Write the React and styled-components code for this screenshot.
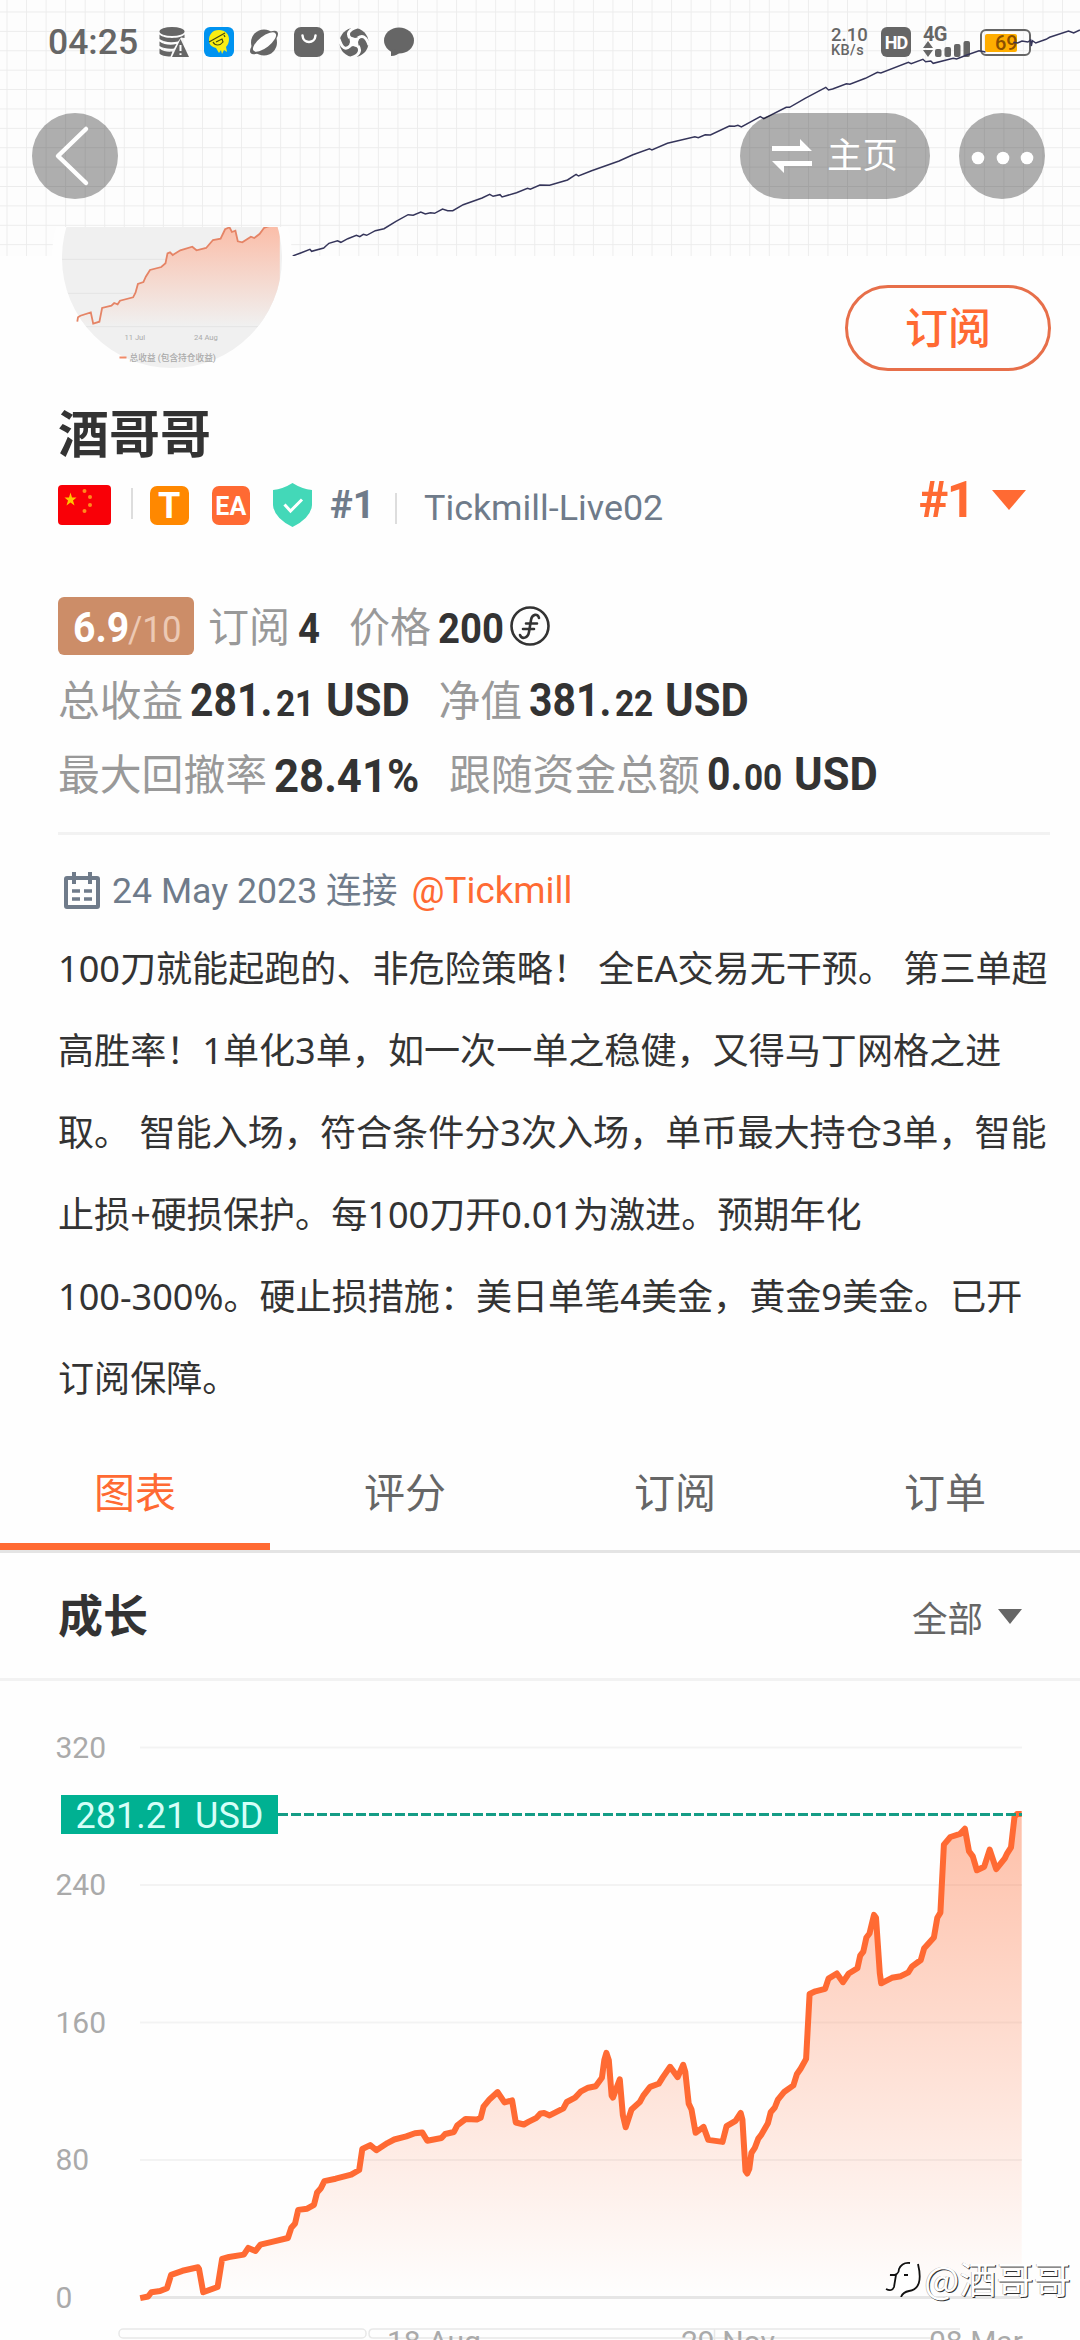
import React from 'react';
import styled, { createGlobalStyle } from 'styled-components'


const colors = {
    orange: '#ff6a33',
    dark: '#333333',
    grey: '#666666',
    lightGrey: '#999999',
    slate: '#6f7b8a',
    teal: '#00b192',
    line: '#f2f2f2',
}

const fonts = {
    main: `Roboto, "Noto Sans CJK SC", sans-serif`,
    text: `"Noto Sans", "Noto Sans CJK SC", sans-serif`,
}

const GlobalStyle = createGlobalStyle`
    * {
        box-sizing: border-box;
    }
    body {
        margin: 0;
        background: #fefefe;
        font-family: ${fonts.main};
        color: ${colors.dark};
    }
    svg {
        display: block;
        flex-shrink: 0;
    }
`

const Screen = styled.div`
    position: relative;
    width: 1080px;
    height: 2340px;
    overflow: hidden;
    background: #fefefe;
`

/* cover */
const Cover = styled.header`
    position: relative;
    height: 256px;
    background-color: #fdfdfd;
    background-image:
        linear-gradient(#ececec 1px, transparent 1px),
        linear-gradient(90deg, #ededed 1px, transparent 1px);
    background-size: 19.56px 19.4px;
    background-position: 6.5px 11.5px;
`
const CoverLine = styled.svg`
    position: absolute;
    left: 0;
    top: 0;
`
const StatusBar = styled.div`
    display: flex;
    align-items: center;
    height: 84px;
    padding: 0 44px 0 48px;
    color: ${colors.grey};
`
const Clock = styled.div`
    width: 111px;
    font-size: 35.5px;
    font-weight: 500;
    line-height: 84px;
`
const StatusIcons = styled.div`
    display: flex;
    gap: 15px;
    flex: 1;
`
const Speed = styled.div`
    width: 50px;
    font-weight: 500;
    font-size: 18.5px;
    line-height: 17px;
    small {
        display: block;
        font-size: 14.5px;
        line-height: 14px;
        letter-spacing: .4px;
    }
`
const HdBadge = styled.div`
    width: 30px;
    height: 30px;
    margin-right: 12px;
    border-radius: 6px;
    background: ${colors.grey};
    color: #ffffff;
    font-size: 18px;
    font-weight: 700;
    line-height: 31px;
    text-align: center;
    letter-spacing: -1px;
`
const Signal = styled.div`
    width: 57px;
    height: 30px;
    font-size: 20px;
    font-weight: 700;
    line-height: 14px;
    letter-spacing: -.6px;
`
const Battery = styled.div`
    width: 51px;
    height: 27px;
    padding: 3px;
    margin-right: 5px;
    border: 2px solid ${colors.grey};
    border-radius: 6px;
`
const BatteryLevel = styled.div`
    width: 32px;
    height: 18px;
    padding-left: 10px;
    border-radius: 2px;
    background: #ffad00;
    color: #8a4f00;
    font-size: 20px;
    font-weight: 500;
    line-height: 18px;
`
const NavBar = styled.nav`
    position: relative;
    display: flex;
    align-items: center;
    padding: 29px 35px 0 32px;
`
const RoundButton = styled.div`
    width: 86px;
    height: 86px;
    border-radius: 43px;
    background: rgba(0, 0, 0, .31);
`
const HomeButton = styled.div`
    display: flex;
    align-items: center;
    width: 190px;
    height: 86px;
    margin: 0 29px 0 auto;
    padding-left: 32px;
    gap: 15px;
    border-radius: 43px;
    background: rgba(0, 0, 0, .31);
    color: #ffffff;
    font-size: 35.5px;
    line-height: 86px;
`

/* profile */
const ProfileTop = styled.div`
    position: relative;
    display: flex;
    justify-content: space-between;
    height: 151px;
    margin-top: -29px;
    padding: 0 29px 0 52px;
`
const AvatarCrop = styled.div`
    width: 240px;
    height: 151px;
    overflow: hidden;
`
const Avatar = styled.div`
    width: 240px;
    height: 240px;
    margin-top: -89px;
    border: 10px solid #fefefe;
    border-radius: 50%;
    background: #fefefe;
    svg {
        overflow: visible;
    }
`
const SubscribeButton = styled.div`
    width: 206px;
    height: 86px;
    margin-top: 58px;
    border: 3px solid #e76f4a;
    border-radius: 43px;
    color: ${colors.orange};
    font-size: 43px;
    font-weight: 500;
    line-height: 82px;
    text-align: center;
`
const Name = styled.h1`
    height: 74px;
    margin: 22px 0 0 58px;
    font-size: 51px;
    font-weight: 700;
    line-height: 72px;
`
const BadgeRow = styled.div`
    display: flex;
    align-items: center;
    height: 50px;
    margin-top: 6px;
    padding: 0 54px 0 58px;
`
const Separator = styled.span`
    width: 2px;
    height: 31px;
    margin: ${props => props.$margin};
    background: #dddddd;
`
const Badge = styled.span`
    width: 38.5px;
    height: 39px;
    margin-right: 23px;
    border-radius: 7px;
    background: ${props => props.$color};
    color: #ffffff;
    font-size: ${props => props.$size}px;
    font-weight: 700;
    line-height: 41px;
    text-align: center;
`
const Rank = styled.span`
    width: 65px;
    margin-left: 18px;
    color: ${colors.slate};
    font-size: 38.5px;
    font-weight: 700;
    line-height: 52px;
`
const Server = styled.span`
    color: ${colors.slate};
    font-size: 35.9px;
    line-height: 52px;
    padding-top: 5px;
`
const TopRank = styled.span`
    display: flex;
    align-items: center;
    gap: 18px;
    margin: -11px 0 0 auto;
    color: ${colors.orange};
    font-size: 50px;
    font-weight: 700;
    letter-spacing: -1.5px;
`

/* account stats */
const Stats = styled.section`
    margin: 59px 30px 0 58px;
    padding-bottom: 21px;
    border-bottom: 3px solid ${colors.line};
`
const StatRow = styled.div`
    display: flex;
    align-items: center;
    height: 74px;
`
const Score = styled.div`
    display: flex;
    align-items: baseline;
    width: 136px;
    height: 58px;
    margin-right: 14px;
    padding-left: 15px;
    border-radius: 6px;
    background: #cc8d68;
    color: #ffffff;
    line-height: 61px;
`
const Label = styled.span`
    margin-left: ${props => props.$left || 0}px;
    margin-right: ${props => props.$right || 7}px;
    padding-top: 3px;
    color: ${colors.lightGrey};
    font-size: ${props => props.$size || 41.8}px;
    line-height: 60px;
    white-space: nowrap;
`
const Figure = styled.span`
    display: flex;
    align-items: baseline;
    padding-top: 3px;
    line-height: 60px;
`
/* narrow figures: the box keeps the squeezed width */
const Digits = styled.span`
    display: inline-block;
    width: ${props => props.$width}px;
    font-size: ${props => props.$size || 46}px;
    font-weight: ${props => props.$weight || 700};
    color: ${props => props.$color || 'inherit'};
    white-space: pre;
    transform: scaleX(${props => props.$squeeze || .89});
    transform-origin: 0 50%;
`

/* description */
const Connected = styled.div`
    display: flex;
    align-items: center;
    margin: 29px 0 0 64px;
    height: 54px;
    color: ${colors.slate};
    font-size: 35.7px;
    line-height: 54px;
    svg {
        margin-right: 12px;
    }
    a {
        margin-left: 14px;
        color: ${colors.orange};
        font-size: 36.8px;
    }
`
const Description = styled.p`
    height: 492px;
    margin: 9px 0 0 58px;
    font-family: ${fonts.text};
    font-size: 36.1px;
    line-height: 82px;
    white-space: nowrap;
`

/* tabs */
const Tabs = styled.div`
    display: grid;
    grid-template-columns: repeat(4, 1fr);
    height: 125px;
    border-bottom: 3px solid #e4e4e4;
    margin-top: 9px;
`
const Tab = styled.div`
    height: 122px;
    border-bottom: 7px solid ${props => props.$active ? colors.orange : 'transparent'};
    color: ${props => props.$active ? colors.orange : colors.grey};
    font-size: 41px;
    line-height: 133px;
    text-align: center;
`
const SectionHead = styled.div`
    display: flex;
    align-items: center;
    justify-content: space-between;
    height: 128px;
    padding: 0 58px;
    border-bottom: 3px solid ${colors.line};
`
const SectionTitle = styled.h2`
    margin: 0;
    padding-top: 4px;
    font-size: 45px;
    font-weight: 700;
    line-height: 120px;
`
const Period = styled.div`
    display: flex;
    align-items: center;
    gap: 15px;
    padding-top: 2px;
    color: ${colors.grey};
    font-size: 35.5px;
`
const Watermark = styled.div`
    position: absolute;
    right: 9px;
    top: 2252px;
    display: flex;
    align-items: center;
    gap: 3px;
    color: #ffffff;
    font-family: "Noto Sans CJK SC", sans-serif;
    font-size: 37.2px;
    line-height: 52px;
    text-shadow: 1px 1px 0 #333333, -.5px -.5px 0 #aaaaaa;
`

/* points are kept in source units and scaled down to pixels */
const scale = (points, kx, ky) =>
    points.trim().split(/\s+/).map(p => {
        const [x, y] = p.split(',').map(Number)
        return `${(x / kx).toFixed(1)},${(y / ky).toFixed(1)}`
    }).join(' ')

const coverPoints = scale(`850,768 875,758 900,748 905,754 940,744 955,730 980,722 990,727 1010,716 1035,706 1045,710
    1055,703 1065,706 1090,692 1115,686 1150,664 1185,644 1200,646 1222,636 1235,642 1250,638 1262,640 1285,627
    1300,632 1315,632 1345,614 1400,594 1422,583 1432,589 1452,584 1458,591 1500,578 1532,565 1540,568 1568,555
    1596,556 1648,540 1673,523 1680,528 1718,512 1798,483 1838,464 1886,446 1893,450 1938,430 2018,410 2028,413
    2048,404 2063,405 2118,378 2133,379 2143,376 2153,381 2208,350 2218,356 2283,322 2293,322 2338,295 2398,262
    2406,270 2418,267 2458,251 2468,253 2513,235 2548,217 2558,219 2638,187 2646,191 2680,178 2688,185 2703,183
    2710,190 2768,175 2778,177 2808,165 2843,152 2862,156`, 2.904, 3)
const coverTail = scale(`2943,127 2955,129 2968,123 2985,126 2993,120 2995,138 2998,122 3008,129 3038,118 3048,112
    3103,93 3118,99 3136,90`, 2.904, 3)

const avatarPoints = scale(`226,335 228,322 235,317 265,307 272,341 290,335 298,294 325,287 333,279 343,283 350,272
    388,262 395,248 402,222 418,216 425,200 437,180 470,171 482,160 488,130 495,127 503,135 525,121 560,110 572,121
    600,114 620,90 642,86 655,58 668,52 675,66 685,62 692,94 705,97 730,80 740,84 755,72 768,54 778,50 814,40`, 2.904, 3)

const growthPoints = scale(`407,1462 430,1458 440,1447 465,1444 485,1437 497,1403 530,1393 575,1384 578,1388 590,1447
    632,1434 645,1363 665,1358 708,1352 721,1335 742,1343 756,1327 790,1320 836,1310 846,1284 857,1273 866,1239
    892,1236 912,1226 921,1195 932,1184 942,1166 975,1160 1020,1150 1043,1138 1052,1085 1075,1075 1093,1088
    1125,1070 1145,1061 1180,1053 1205,1045 1226,1043 1241,1064 1282,1057 1293,1047 1318,1042 1328,1025 1352,1009
    1385,1010 1396,1006 1404,978 1422,959 1445,941 1465,967 1487,962 1498,1018 1521,1023 1536,1016 1558,1006
    1570,995 1580,994 1596,1000 1636,982 1646,966 1670,955 1686,940 1708,930 1730,926 1748,905 1755,860 1761,842
    1768,860 1776,950 1780,955 1800,909 1809,1000 1817,1030 1834,985 1858,966 1868,950 1888,928 1913,920 1925,903
    1946,877 1968,903 1984,872 1990,890 2000,970 2008,985 2020,1044 2043,1029 2057,1062 2098,1067 2110,1027
    2136,1014 2151,994 2156,1010 2165,1140 2170,1147 2176,1135 2182,1095 2192,1082 2202,1059 2210,1050 2230,1020
    2238,992 2250,980 2259,960 2278,940 2304,924 2314,896 2325,882 2341,857 2351,693 2368,686 2396,680 2406,654
    2430,641 2448,663 2465,641 2490,628 2498,596 2507,586 2516,550 2525,540 2538,493 2544,500 2555,640 2559,666
    2590,652 2616,648 2638,638 2648,624 2674,607 2684,577 2712,550 2722,500 2731,487 2741,315 2760,296 2788,288
    2802,275 2814,332 2825,345 2837,380 2858,371 2874,328 2893,377 2918,350 2925,337 2936,322 2946,245 2953,238
    2967,238`, 2.904, 2.529)

const axis = [
    { value: 320, y: 27.5 },
    { value: 240, y: 165 },
    { value: 160, y: 302.5 },
    { value: 80, y: 440 },
    { value: 0, y: 577.5 },
]

const tabs = ['图表', '评分', '订阅', '订单']

const Money = ({ whole, cents, widths }) => (
    <Figure>
        <Digits $width={widths[0]}>{whole}.</Digits>
        <Digits $width={widths[1]} $size={37} $squeeze={.9}>{cents}</Digits>
        <Digits $width={85} $squeeze={.945}>USD</Digits>
    </Figure>
)

const StatusBarContent = () => (
    <StatusBar>
        <Clock>04:25</Clock>
        <StatusIcons>
            <svg width="30" height="30" viewBox="0 0 30 30" fill={colors.grey}>
                <ellipse cx="13" cy="4.5" rx="12.5" ry="4.5" />
                <path d="M.5 7.5C4 12 22 12 25.500 7.500V11L22 10.500 19 14.500C12 16 4 15 .5 12Z" />
                <path d="M.5 14.500C5 18 12 18.500 17.500 17L15 21.500C10 22 4 21.500 .5 19Z" />
                <path d="M.5 21.500C4 24.500 9 25 13.500 24.500L11.500 29.500C6 29.500 2 28.500 .5 26.500Z" />
                <path d="M21.500 12 30 30H13Z" />
                <path d="M21.500 18V24M21.500 26.200V28" stroke="#fff" strokeWidth="2" />
            </svg>
            <svg width="30" height="30" viewBox="0 0 30 30">
                <rect width="30" height="30" rx="6" fill="#0093f0" />
                <path d="M15 3C8 3 5 8 5 13c0 5 3 7 7 8l3 5 2-3 1 4 2-4 3 2-1-5c2-2 3-5 3-8 0-5-4-9-10-9Z" fill="#f9ee13" />
                <path d="M5 15 21 6M9 15c2 4 7 4 10 0l-1-3-6 3M20 8l1 2" fill="none" stroke="#454a10" strokeWidth="1.2" />
            </svg>
            <svg width="30" height="30" viewBox="0 0 30 30">
                <circle cx="15" cy="15.500" r="13" fill={colors.grey} />
                <ellipse cx="15" cy="15.500" rx="17" ry="6.500" transform="rotate(-38 15 15.500)" fill={colors.grey} />
                <ellipse cx="15.500" cy="15" rx="14" ry="5.700" transform="rotate(-38 15.500 15)" fill="#fdfdfd" />
            </svg>
            <svg width="30" height="30" viewBox="0 0 30 30">
                <rect width="30" height="30" rx="7" fill={colors.grey} />
                <path d="M8.500 8.500C9 17 21 17 21.500 8.500" fill="none" stroke="#fff" strokeWidth="2.500" strokeLinecap="round" />
            </svg>
            <svg width="30" height="30" viewBox="0 0 30 30">
                <circle cx="15" cy="15.500" r="14.500" fill={colors.grey} />
                <g fill="none" stroke="#fdfdfd" strokeWidth="3">
                    <path d="M18 0C9 3 8 7 11 11M30 18C27 9 23 8 19 11M12 31C21 28 22 23 19 19M0 12C3 22 7 23 11 19" />
                </g>
                <path d="M10 9 16 11 21 10 19 15 20 21 14 19 9 21 11 15Z" fill="#fdfdfd" />
            </svg>
            <svg width="30" height="30" viewBox="0 0 30 30" fill={colors.grey}>
                <ellipse cx="15" cy="13.500" rx="15" ry="13" />
                <path d="M7 22V29C11 29 15 27 17 24Z" />
            </svg>
        </StatusIcons>
        <Speed>2.10<small>KB/s</small></Speed>
        <HdBadge>HD</HdBadge>
        <Signal>
            4G
            <svg width="48" height="16" viewBox="0 0 48 16" fill={colors.grey}>
                <path d="M0 7 5 0 10 7ZM0 9H10L5 16Z" />
                <rect x="12" y="8" width="6.500" height="8" rx="2" />
                <rect x="21.500" y="6" width="6.500" height="10" rx="2" />
                <rect x="31" y="3" width="6.500" height="13" rx="2" />
                <rect x="40.500" y="0" width="6.500" height="16" rx="2" />
            </svg>
        </Signal>
        <Battery>
            <BatteryLevel>69</BatteryLevel>
        </Battery>
    </StatusBar>
)

const AvatarPicture = () => (
    <svg width="220" height="220" viewBox="62.500 -62 220 220">
        <defs>
            <linearGradient id="avatarFill" x1="0" y1="0" x2="0" y2="1">
                <stop offset="0" stopColor="#fbbca6" />
                <stop offset="1" stopColor="#f0f0f0" />
            </linearGradient>
            <clipPath id="avatarClip">
                <circle cx="172.500" cy="48" r="110" />
            </clipPath>
        </defs>
        <g clipPath="url(#avatarClip)">
            <rect x="60" y="-64" width="230" height="230" fill="#f0f0f0" />
            <path d="M60 49.300H280M60 83.300H280M60 116.700H280" stroke="#e4e4e4" />
            <polygon points={`${avatarPoints} 280.300,116 78,116`} fill="url(#avatarFill)" />
        </g>
        <polyline points={avatarPoints} fill="none" stroke="#e58466" strokeWidth="1.800" />
        <g fill="#aaaaaa" fontFamily={fonts.main} fontSize="7.600">
            <text x="125" y="130">11 Jul</text>
            <text x="194.500" y="130">24 Aug</text>
            <text x="130" y="151" fontSize="8.700" fontWeight="500">总收益 (包含持仓收益)</text>
        </g>
        <path d="M120 147.500H127" stroke="#f08a68" strokeWidth="2" />
    </svg>
)

const GrowthChart = () => (
    <svg width="1080" height="659" viewBox="0 -39 1080 659">
        <defs>
            <linearGradient id="growthFill" gradientUnits="userSpaceOnUse" x1="0" y1="94" x2="0" y2="577">
                <stop offset="0" stopColor={colors.orange} stopOpacity=".42" />
                <stop offset="1" stopColor={colors.orange} stopOpacity="0" />
            </linearGradient>
        </defs>
        {axis.map(({ value, y }) => (
            <g key={value}>
                <path d={`M140 ${y}H1022`} stroke={value ? '#f3f3f3' : '#e6e6e6'} strokeWidth={value ? 2 : 3} />
                <text x="55.500" y={y + 10} fontFamily={fonts.main} fontSize="30" fill="#aaaaaa">{value}</text>
            </g>
        ))}
        <polygon points={`${growthPoints} 1021.700,577 140,577`} fill="url(#growthFill)" />
        <polyline points={growthPoints} fill="none" stroke={colors.orange} strokeWidth="6" strokeLinejoin="round" />
        <path d="M278 94.500H1022" stroke="#149c85" strokeWidth="3" strokeDasharray="10 3" />
        <rect x="61" y="75" width="217" height="39" fill={colors.teal} />
        <text x="75.500" y="108" fontFamily={fonts.main} fontSize="36" fill="#d5fff8">281.21 USD</text>
        <g fill="none" stroke="#e8e8e8" strokeWidth="1.500">
            <rect x="119" y="609" width="247" height="9" rx="4" />
            <path d="M960 609H373Q369 609 369 613.500T373 618H930M714.500 609V620" />
        </g>
        <g fill="#aaaaaa" fontFamily={fonts.main} fontSize="30">
            <text x="387" y="631.500">18 Aug</text>
            <text x="681" y="631.500">29 Nov</text>
            <text x="929" y="631.500">08 Mar</text>
        </g>
    </svg>
)

const App = () => {
    return (
        <Screen>
            <GlobalStyle />
            <Cover>
                <StatusBarContent />
                <CoverLine width="1080" height="256" fill="none" stroke="#35355a" strokeWidth="1.500">
                    <polyline points={coverPoints} />
                    <polyline points={coverTail} />
                </CoverLine>
                <NavBar>
                    <RoundButton>
                        <svg width="86" height="86" fill="none" stroke="#fff" strokeWidth="4.500" strokeLinecap="round" strokeLinejoin="round">
                            <path d="M54 16 26 43 54 70" />
                        </svg>
                    </RoundButton>
                    <HomeButton>
                        <svg width="40" height="34" viewBox="0 0 40 34" fill="#fff">
                            <path d="M0 7H28V0L40 12H0ZM40 27H12V34L0 22H40Z" />
                        </svg>
                        主页
                    </HomeButton>
                    <RoundButton>
                        <svg width="86" height="86" fill="#fff">
                            <circle cx="19" cy="45" r="6.300" />
                            <circle cx="44" cy="45" r="6.300" />
                            <circle cx="68" cy="45" r="6.300" />
                        </svg>
                    </RoundButton>
                </NavBar>
            </Cover>

            <ProfileTop>
                <AvatarCrop>
                    <Avatar><AvatarPicture /></Avatar>
                </AvatarCrop>
                <SubscribeButton>订阅</SubscribeButton>
            </ProfileTop>
            <Name>酒哥哥</Name>
            <BadgeRow>
                <svg width="53" height="40" viewBox="0 0 53 40">
                    <rect width="53" height="40" rx="4" fill="#f90007" />
                    <path d="M12.500 7.500 14 12.500H18.500L15 15.500 16.500 20.500 12.500 17.500 8.500 20.500 10 15.500 6.500 12.500H11Z" fill="#ffc400" />
                    <g fill="#ff8a1c">
                        <circle cx="26.500" cy="6" r="2" />
                        <circle cx="32" cy="12" r="2" />
                        <circle cx="32" cy="20" r="2" />
                        <circle cx="26.500" cy="26" r="2" />
                    </g>
                </svg>
                <Separator $margin="0 17px 3px 20px" />
                <Badge $color="#ff8800" $size={36}>T</Badge>
                <Badge $color={colors.orange} $size={25}>EA</Badge>
                <svg width="39" height="44" viewBox="0 0 39 44">
                    <path d="M19.500 0Q29 6 39 7V22Q38 35 19.500 44 1 35 0 22V7Q10 6 19.500 0Z" fill="#43d8b8" />
                    <path d="M11.500 21.500 17.500 28 29 16.500" fill="none" stroke="#fff" strokeWidth="3" />
                </svg>
                <Rank>#1</Rank>
                <Separator $margin="6px 27px 0 0" />
                <Server>Tickmill-Live02</Server>
                <TopRank>
                    #1
                    <svg width="34" height="20" viewBox="0 0 34 20" fill={colors.orange}><path d="M0 0H34L17 20Z" /></svg>
                </TopRank>
            </BadgeRow>

            <Stats>
                <StatRow>
                    <Score>
                        <Digits $width={55} $size={43} $squeeze={.91}>6.9</Digits>
                        <Digits $width={50} $size={37} $weight={400} $squeeze={.94} $color="#ecc9b4">/10</Digits>
                    </Score>
                    <Label $size={41} $right={8}>订阅</Label>
                    <Figure><Digits $width={28} $size={43}>4</Digits></Figure>
                    <Label $size={41} $left={23}>价格</Label>
                    <Figure><Digits $width={72} $size={43}>200</Digits></Figure>
                    <svg width="40" height="40" viewBox="0 0 40 40" fill="none" stroke={colors.dark} strokeWidth="2.600">
                        <circle cx="20" cy="20" r="18.500" />
                        <path d="M29 12C28 7 22 8 21 14L19 26C18 32 12 34 10 29M16 17.500H27M13 23H24" strokeLinecap="round" />
                    </svg>
                </StatRow>
                <StatRow>
                    <Label>总收益</Label>
                    <Money whole="281" cents="21" widths={[86, 50]} />
                    <Label $left={27}>净值</Label>
                    <Money whole="381" cents="22" widths={[86, 50]} />
                </StatRow>
                <StatRow>
                    <Label>最大回撤率</Label>
                    <Figure><Digits $width={148} $squeeze={.95}>28.41%</Digits></Figure>
                    <Label $left={27}>跟随资金总额</Label>
                    <Money whole="0" cents="00" widths={[37.5, 50]} />
                </StatRow>
            </Stats>

            <Connected>
                <svg width="36" height="38" viewBox="0 0 36 38" fill="none" stroke={colors.slate} strokeWidth="4">
                    <rect x="2" y="6" width="32" height="29" rx="1" />
                    <path d="M10 0V12M26 0V12" />
                    <path d="M8 19H16M20 19H28M8 27H16M20 27H28" strokeWidth="3.500" />
                </svg>
                24 May 2023 连接 <a>@Tickmill</a>
            </Connected>
            <Description>
                100刀就能起跑的、非危险策略&#xFF01; 全EA交易无干预。 第三单超<br />
                高胜率&#xFF01;1单化3单&#xFF0C;如一次一单之稳健&#xFF0C;又得马丁网格之进<br />
                取。 智能入场&#xFF0C;符合条件分3次入场&#xFF0C;单币最大持仓3单&#xFF0C;智能<br />
                止损+硬损保护。每100刀开0.01为激进。预期年化<br />
                100-300%。硬止损措施&#xFF1A;美日单笔4美金&#xFF0C;黄金9美金。已开<br />
                订阅保障。
            </Description>

            <Tabs>
                {tabs.map((tab, i) => <Tab key={tab} $active={i === 0}>{tab}</Tab>)}
            </Tabs>
            <SectionHead>
                <SectionTitle>成长</SectionTitle>
                <Period>
                    全部
                    <svg width="24" height="15" viewBox="0 0 24 15" fill={colors.grey}><path d="M0 0H24L12 15Z" /></svg>
                </Period>
            </SectionHead>
            <GrowthChart />

            <Watermark>
                <svg width="36" height="38" viewBox="0 0 36 38" fill="none">
                    <path d="M2 31 8 17 13 7Q22 0 32 5Q38 28 17 35L12 28Z" fill="#fff" />
                    <path d="M1 30Q7 33 9 28L11 16H5Q14 17 14 10 17 3 25 4" stroke="#111" strokeWidth="1.800" />
                    <path d="M33 5Q39 30 24 32 18 33 16 38M19 16H23" stroke="#111" strokeWidth="1.800" />
                </svg>
                @酒哥哥
            </Watermark>
        </Screen>
    );
};

export default App;
